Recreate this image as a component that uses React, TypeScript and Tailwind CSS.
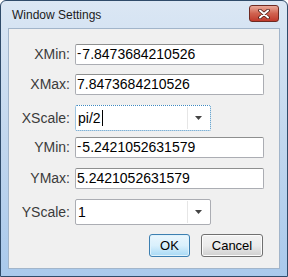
import React from 'react'

const font = { fontFamily: '"Liberation Sans", Arial, sans-serif' }

// TI-style raised negative sign
const Neg = () => <span className="relative top-[-2px] text-[13px] mr-[1px]">-</span>

const TextRow = ({ label, value, neg }: { label: string; value: string; neg?: boolean }) => (
  <div className="flex items-center h-[21px]">
    <div className="w-[61px] pr-[4px] text-right text-[14px] text-[#3b3b3b]">{label}</div>
    <div className="ml-[1px] flex items-center w-[189px] h-[21px] bg-white border border-[#abadb3] border-t-[#8e8f8f] rounded-[2px] pl-[1px] text-[14px] text-black">
      {neg && <Neg />}
      {value}
    </div>
  </div>
)

const ComboRow = ({ label, value, focused }: { label: string; value: string; focused?: boolean }) => (
  <div className="flex items-center h-[26px]">
    <div className="w-[61px] pr-[4px] text-right text-[14px] text-[#3b3b3b]">{label}</div>
    <div
      className={`ml-[1px] flex w-[136px] h-[26px] bg-white rounded-[2px] p-[1px] ${
        focused ? 'border border-dotted border-[#3f8ac0]' : 'border border-[#abadb3]'
      }`}
    >
      <div className="flex-1 flex items-center pl-[1px] text-[14px] text-black">
        {value}
        {focused && <span className="w-px h-[16px] bg-black ml-px" />}
      </div>
      <div className="w-[22px] flex items-center justify-center border-l border-[#e6e6e6] bg-white">
        <svg width="7" height="4" viewBox="0 0 7 4">
          <path d="M0 0h7L3.5 4z" fill="#444" />
        </svg>
      </div>
    </div>
  </div>
)

export default function App() {
  return (
    <div
      style={font}
      className="w-[288px] h-[277px] relative bg-gradient-to-b from-[#dbe7f4] via-[#c2d7ee] to-[#a9c9ec] border border-[#2f4b6a] rounded-t-[6px] flex flex-col"
    >
      <div className="h-[27px] flex items-center justify-between pl-[11px] pr-[8px]">
        <span className="text-[12px] text-[#1b1b1b]">Window Settings</span>
        <button className="w-[30px] h-[17px] mt-[-2px] rounded-[3px] border border-[#6e2a22] bg-gradient-to-b from-[#e9a99a] via-[#d0624f] to-[#c0392b] flex items-center justify-center">
          <svg width="12" height="10" viewBox="0 0 12 10">
            <path d="M2 1.5l8 7M10 1.5l-8 7" stroke="#4a1a14" strokeWidth="3.6" strokeLinecap="round" />
            <path d="M2 1.5l8 7M10 1.5l-8 7" stroke="#ffffff" strokeWidth="2" strokeLinecap="round" />
          </svg>
        </button>
      </div>
      <div className="mx-[7px] h-[241px] bg-[#f0f0f0] border border-[#a2b5ca] flex flex-col pt-[15px] pl-[4px]">
        <TextRow label="XMin:" value="7.8473684210526" neg />
        <div className="h-[9px]" />
        <TextRow label="XMax:" value="7.8473684210526" />
        <div className="h-[10px]" />
        <ComboRow label="XScale:" value="pi/2" focused />
        <div className="h-[6px]" />
        <TextRow label="YMin:" value="5.2421052631579" neg />
        <div className="h-[10px]" />
        <TextRow label="YMax:" value="5.2421052631579" />
        <div className="h-[10px]" />
        <ComboRow label="YScale:" value="1" />
        <div className="h-[9px]" />
        <div className="flex justify-end gap-[11px] pr-[16px]">
          <button className="w-[41px] h-[23px] rounded-[3px] border border-[#3c7fb1] bg-gradient-to-b from-[#eaf6fd] via-[#d9f0fc] to-[#a7d9f5] text-[13px] text-black shadow-[inset_0_0_0_1px_#dff2fc]">
            OK
          </button>
          <button className="w-[62px] h-[23px] rounded-[3px] border border-[#707070] bg-gradient-to-b from-[#f2f2f2] via-[#ebebeb] to-[#cfcfcf] text-[13px] text-black shadow-[inset_0_0_0_1px_#fcfcfc]">
            Cancel
          </button>
        </div>
      </div>
    </div>
  )
}
